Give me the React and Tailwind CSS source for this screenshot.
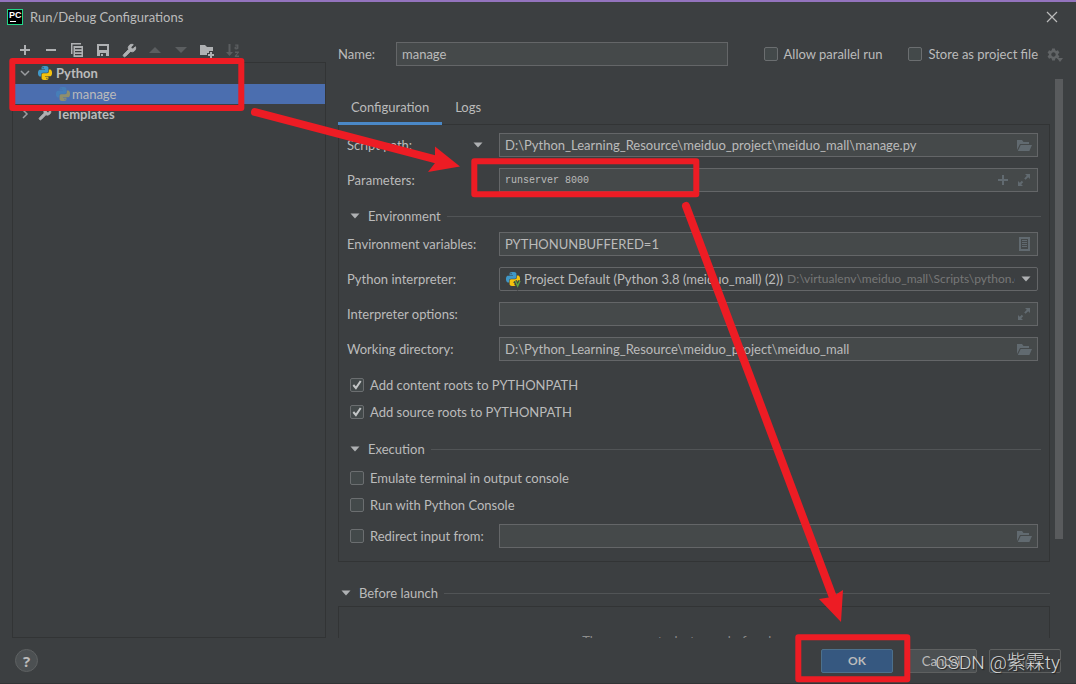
import { useId, useState } from "react";
import { Wrench } from "lucide-react";
import { MdSettings } from "react-icons/md";

const SNAKE =
  "M14.25.18l.9.2.73.26.59.3.45.32.34.34.25.34.16.33.1.3.04.26.02.2-.01.13V8.5l-.05.63-.13.55-.21.46-.26.38-.3.31-.33.25-.35.19-.35.14-.33.1-.3.07-.26.04-.21.02H8.77l-.69.05-.59.14-.5.22-.41.27-.33.32-.27.35-.2.36-.15.37-.1.35-.07.32-.04.27-.02.21v3.06H3.17l-.21-.03-.28-.07-.32-.12-.35-.18-.36-.26-.36-.36-.35-.46-.32-.59-.28-.73-.21-.88-.14-1.05-.05-1.23.06-1.22.16-1.04.24-.87.32-.71.36-.57.4-.44.42-.33.42-.24.4-.16.36-.1.32-.05.24-.01h.16l.06.01h8.16v-.83H6.18l-.01-2.75-.02-.37.05-.34.11-.31.17-.28.25-.26.31-.23.38-.2.44-.18.51-.15.58-.12.64-.1.71-.06.77-.04.84-.02 1.27.05zm-6.3 1.98l-.23.33-.08.41.08.41.23.34.33.22.41.09.41-.09.33-.22.23-.34.08-.41-.08-.41-.23-.33-.33-.22-.41-.09-.41.09z";

function PythonIcon({ className = "", venv = false }) {
  return (
    <svg viewBox="0 0 24 24" className={`size-[14px] shrink-0 overflow-visible ${className}`} aria-hidden="true">
      <path d={SNAKE} fill="#3f97c7" />
      <path d={SNAKE} fill="#f4c20d" transform="rotate(180 12 12)" />
      {venv && <path d="M16 15l4 10 4-10" fill="none" stroke="#3c3f41" strokeWidth="6" />}
      {venv && <path d="M16 15l4 9 4-9" fill="none" stroke="#5fa53f" strokeWidth="2.6" />}
    </svg>
  );
}

function Icon({ children, className = "size-4" }) {
  return (
    <svg viewBox="0 0 16 16" fill="currentColor" className={`shrink-0 ${className}`} aria-hidden="true">
      {children}
    </svg>
  );
}

const Down = ({ className }) => (
  <Icon className={className}>
    <path d="M3.5 5.5h9L8 10.5z" />
  </Icon>
);

const FolderIcon = () => (
  <Icon>
    <path d="M1 13V3h5l1.5 2H13v2H4z" />
    <path d="M4.7 8H16l-2.6 6H1.8z" />
  </Icon>
);

const ExpandIcon = () => (
  <Icon>
    <path d="M9 2h5v5l-1.8-1.8-2.6 2.6-1.4-1.4 2.6-2.6zM7 14H2V9l1.8 1.8 2-2 1.4 1.4-2 2z" />
  </Icon>
);

const ListIcon = () => (
  <Icon>
    <path fillRule="evenodd" d="M3 1h11v14H3zM5 3v10h7V3z" />
    <path d="M6 4h5v1H6zM6 6h5v1H6zM6 8h5v1H6zM6 10h5v1H6z" />
  </Icon>
);

const PlusIcon = () => (
  <Icon>
    <path d="M7 3h2v4h4v2H9v4H7V9H3V7h4z" />
  </Icon>
);

function ToolButton({ label, disabled, children }) {
  return (
    <button
      type="button"
      aria-label={label}
      disabled={disabled}
      className="flex h-6 w-[26px] items-center justify-center text-[#afb1b3] disabled:text-[#5b5e60]"
    >
      {children}
    </button>
  );
}

function Check({ label, initial = false }) {
  const [checked, setChecked] = useState(initial);
  return (
    <label className="flex h-5 items-center gap-[6px] whitespace-nowrap">
      <span className="grid size-[14px] shrink-0">
        <input
          type="checkbox"
          checked={checked}
          onChange={(e) => setChecked(e.target.checked)}
          className="col-start-1 row-start-1 size-[14px] appearance-none rounded-xs border border-[#6b6e70] bg-[#43494a]"
        />
        {checked && (
          <svg viewBox="0 0 14 14" className="pointer-events-none col-start-1 row-start-1 size-[14px]" aria-hidden="true">
            <path d="M3.300 7l2.600 3L10.700 3" fill="none" stroke="#c4c6c7" strokeWidth="2" />
          </svg>
        )}
      </span>
      {label}
    </label>
  );
}

function Field({ label, value = "", mono = false, arrow = false, actions }) {
  const id = useId();
  return (
    <div className="grid grid-cols-[152px_1fr] items-center">
      <div className="flex items-center justify-between pr-[13px]">
        <label htmlFor={id} className="whitespace-nowrap">{label}</label>
        {arrow && (
          <button type="button" aria-label="Choose target" className="text-[#afb1b3]">
            <Down className="size-4" />
          </button>
        )}
      </div>
      <InputBox id={id} value={value} mono={mono} actions={actions} />
    </div>
  );
}

function InputBox({ id, value = "", mono, actions, ariaLabel }) {
  return (
    <div className="flex h-6 min-w-0 items-center gap-[5px] border border-[#646668] bg-[#45494a] pr-[5px] text-[#616a70]">
      <input
        id={id}
        type="text"
        aria-label={ariaLabel}
        defaultValue={value}
        className={
          mono
            ? "h-full min-w-0 flex-1 bg-transparent px-[5px] font-['Liberation_Mono',monospace] text-[10px] text-[#bbbbbb] outline-none"
            : "h-full min-w-0 flex-1 bg-transparent px-[5px] text-[#bbbbbb] outline-none"
        }
      />
      {actions}
    </div>
  );
}

function Action({ label, children }) {
  return (
    <button type="button" aria-label={label} className="flex shrink-0">
      {children}
    </button>
  );
}

function SectionHeader({ title, className = "" }) {
  return (
    <div className={`flex h-6 items-center gap-[6px] ${className}`}>
      <button type="button" className="flex items-center gap-[5px]">
        <Down className="size-4 text-[#afb1b3]" />
        {title}
      </button>
      <div className="h-px flex-1 bg-[#515456]" />
    </div>
  );
}

function Toolbar() {
  return (
    <div className="flex h-6 shrink-0 overflow-hidden">
      <ToolButton label="Add"><PlusIcon /></ToolButton>
      <ToolButton label="Remove">
        <Icon><path d="M3 7h10v2H3z" /></Icon>
      </ToolButton>
      <ToolButton label="Copy">
        <Icon>
          <path d="M2 1h10v1.500H3.500V12H2z" />
          <path fillRule="evenodd" d="M4.500 4H14v11H4.500zM6 6v1.200h6.500V6zM6 9v1.200h6.500V9zM6 12v1.200h6.500V12z" />
        </Icon>
      </ToolButton>
      <ToolButton label="Save">
        <Icon>
          <path fillRule="evenodd" d="M2 2h12v12H2zM4 4v4h8V4zM5 11v3h6v-3z" />
          <path d="M6 12h2v2H6z" />
        </Icon>
      </ToolButton>
      <ToolButton label="Edit templates">
        <Wrench className="size-[15px]" fill="currentColor" strokeWidth={1.5} />
      </ToolButton>
      <ToolButton label="Move up" disabled>
        <Icon><path d="M2 11h12L8 5z" /></Icon>
      </ToolButton>
      <ToolButton label="Move down" disabled>
        <Icon><path d="M2 5h12l-6 6z" /></Icon>
      </ToolButton>
      <ToolButton label="Create folder">
        <Icon>
          <path d="M1 3h5l2 2h6v4h-4v2H8v2H1z" />
          <path d="M11 10h2v2h2v2h-2v2h-2v-2H9v-2h2z" />
        </Icon>
      </ToolButton>
      <ToolButton label="Sort" disabled>
        <Icon>
          <path d="M3.500 2h2v8H8l-3.500 4L1 10h2.500z" />
          <path d="M10 9.500h4v1l-2.500 3H14V15h-4.200v-1.200l2.500-2.800H10z" />
          <path
            d="M10.200 3.200h2.600v3.600M12.800 5h-1.800q-1 .1-1 .9t1 .9q1.300 0 1.800-.9"
            fill="none"
            stroke="currentColor"
            strokeWidth="1.200"
          />
        </Icon>
      </ToolButton>
    </div>
  );
}

function Tree() {
  return (
    <ul role="tree" aria-label="Configurations" className="min-h-0 flex-1 border border-[#323435]">
      <li role="treeitem" aria-expanded="true" aria-selected="false" className="flex h-[21px] items-center pb-px pl-1 font-bold">
        <svg viewBox="0 0 16 16" className="size-4" aria-hidden="true">
          <path d="M4 6l4 4 4-4" fill="none" stroke="#9b9da0" strokeWidth="1.500" />
        </svg>
        <PythonIcon className="mr-1 ml-[5px]" />
        Python
      </li>
      <li role="treeitem" aria-selected="true" className="flex h-5 items-center bg-[#4b6eaf] pl-[43px]">
        <PythonIcon className="mr-[2px] opacity-40" />
        manage
      </li>
      <li role="treeitem" aria-expanded="false" aria-selected="false" className="flex h-5 items-center pl-1 font-bold">
        <svg viewBox="0 0 16 16" className="size-4" aria-hidden="true">
          <path d="M6 4l4 4-4 4" fill="none" stroke="#9b9da0" strokeWidth="1.500" />
        </svg>
        <Wrench className="mr-1 ml-[5px] size-[14px] text-[#afb1b3]" fill="currentColor" strokeWidth={1.5} />
        Templates
      </li>
    </ul>
  );
}

function Interpreter() {
  const id = useId();
  return (
    <div className="grid grid-cols-[152px_1fr] items-center">
      <label htmlFor={id}>Python interpreter:</label>
      <div className="flex h-6 min-w-0 items-center rounded-xs border border-[#646668] pr-[3px] pl-[6px]">
        <PythonIcon venv className="mr-1" />
        <select id={id} className="shrink-0 appearance-none bg-transparent text-[#bbbbbb] outline-none">
          <option>Project Default (Python 3.8 (meiduo_mall) (2))</option>
        </select>
        <span className="ml-1 min-w-0 flex-1 overflow-hidden text-[12px] whitespace-nowrap text-[#777777]">
          D:\virtualenv\meiduo_mall\Scripts\python.exe
        </span>
        <Down className="ml-[3px] size-4 text-[#afb1b3]" />
      </div>
    </div>
  );
}

function ConfigurationPanel() {
  return (
    <div className="border border-[#323435] pt-2 pr-[11px] pb-[13px] pl-2">
      <div className="flex flex-col gap-[11px]">
        <Field
          label="Script path:"
          arrow
          value="D:\Python_Learning_Resource\meiduo_project\meiduo_mall\manage.py"
          actions={<Action label="Browse"><FolderIcon /></Action>}
        />
        <Field
          label="Parameters:"
          mono
          value="runserver 8000"
          actions={
            <>
              <Action label="Insert macro"><PlusIcon /></Action>
              <Action label="Expand"><ExpandIcon /></Action>
            </>
          }
        />
      </div>
      <SectionHeader title="Environment" className="mt-3 -mr-[3px] mb-1" />
      <div className="flex flex-col gap-[11px]">
        <Field
          label="Environment variables:"
          value="PYTHONUNBUFFERED=1"
          actions={<Action label="Edit variables"><ListIcon /></Action>}
        />
        <Interpreter />
        <Field label="Interpreter options:" actions={<Action label="Expand"><ExpandIcon /></Action>} />
        <Field
          label="Working directory:"
          value="D:\Python_Learning_Resource\meiduo_project\meiduo_mall"
          actions={<Action label="Browse"><FolderIcon /></Action>}
        />
      </div>
      <div className="mt-[14px] flex flex-col gap-[7px] pl-[3px]">
        <Check label="Add content roots to PYTHONPATH" initial />
        <Check label="Add source roots to PYTHONPATH" initial />
      </div>
      <SectionHeader title="Execution" className="mt-[15px] -mr-[3px] mb-[7px]" />
      <div className="flex flex-col gap-[7px] pl-[3px]">
        <Check label="Emulate terminal in output console" />
        <Check label="Run with Python Console" />
      </div>
      <div className="mt-[9px] grid grid-cols-[149px_1fr] items-center pl-[3px]">
        <Check label="Redirect input from:" />
        <InputBox ariaLabel="Redirect input file" actions={<Action label="Browse"><FolderIcon /></Action>} />
      </div>
    </div>
  );
}

function Annotations() {
  return (
    <svg className="pointer-events-none absolute top-0 left-0 h-[684px] w-[1076px]" viewBox="0 0 1076 684" aria-hidden="true">
      <g fill="none" stroke="#ed1c24" strokeWidth="6" strokeLinejoin="round">
        <rect x="12.300" y="61" width="229" height="47" />
        <rect x="474.300" y="161.300" width="222" height="33" />
        <rect x="798.300" y="637.300" width="109" height="42" />
      </g>
      <g stroke="#ed1c24" strokeWidth="8" strokeLinecap="round">
        <path d="M255 112L438 160" />
        <path d="M686 206L834 600" />
      </g>
      <g fill="#ed1c24">
        <path d="M435 146.500L460 166.500L428 172L435 163z" />
        <path d="M819 599L832 597L843 590L841 622z" />
      </g>
    </svg>
  );
}

export default function App() {
  const nameId = useId();
  return (
    <div className="relative flex h-screen flex-col overflow-hidden border-b border-b-[#323435] bg-[#3c3f41] font-[Lato,'Noto_Sans_CJK_SC',sans-serif] text-[13px] leading-5 text-[#bbbbbb]">
      <div className="h-[2px] shrink-0 bg-[#9373bd]" />
      <header className="flex h-[29px] shrink-0 items-center gap-[7px] pr-4 pl-[7px]">
        <div className="flex size-4 flex-col justify-between border border-[#21d789] bg-black px-px pt-px pb-[2px] font-['Liberation_Sans',sans-serif] text-[9px] leading-[8px] font-bold text-white">
          PC
          <span className="ml-px h-px w-[6px] bg-white" />
        </div>
        <h1 className="flex-1">Run/Debug Configurations</h1>
        <button type="button" aria-label="Close">
          <Icon>
            <path d="M3 3l10 10M13 3L3 13" stroke="#bbbbbb" strokeWidth="1.200" />
          </Icon>
        </button>
      </header>

      <main className="flex min-h-0 flex-1 gap-3 pr-[13px] pl-3">
        <aside className="flex w-[314px] shrink-0 flex-col pt-[7px]">
          <Toolbar />
          <Tree />
        </aside>

        <section className="flex min-w-0 flex-1 flex-col pt-[11px]">
          <div className="flex h-6 shrink-0 items-center">
            <label htmlFor={nameId} className="w-[58px] shrink-0">Name:</label>
            <input
              id={nameId}
              type="text"
              defaultValue="manage"
              className="h-6 min-w-0 flex-1 border border-[#646668] bg-[#45494a] px-[5px] outline-none"
            />
            <div className="ml-9 flex gap-[26px]">
              <Check label="Allow parallel run" />
              <Check label="Store as project file" />
            </div>
            <button type="button" aria-label="Storage settings" className="ml-2 flex items-end text-[#616466]">
              <MdSettings className="size-[15px]" aria-hidden="true" />
              <svg viewBox="0 0 6 4" className="-ml-1 h-1 w-[6px]" fill="currentColor" aria-hidden="true">
                <path d="M0 0h6L3 4z" />
              </svg>
            </button>
          </div>

          <div className="mt-[13px] flex min-h-0 flex-1 gap-[5px]">
            <div className="min-w-0 flex-1 overflow-hidden pt-3">
              <div role="tablist" className="relative -mb-px flex">
                <button type="button" role="tab" aria-selected="true" className="h-[34px] border-b-3 border-[#4a88c7] px-[13px]">
                  Configuration
                </button>
                <button type="button" role="tab" aria-selected="false" className="h-[34px] border-b-3 border-transparent px-[13px]">
                  Logs
                </button>
              </div>
              <ConfigurationPanel />
              <SectionHeader title="Before launch" className="mt-[19px] mb-px" />
              <div className="border border-[#323435] pt-6 pb-10 text-center text-[#8c8c8c]">
                There are no tasks to run before launch
              </div>
            </div>
            <div className="h-[460px] w-2 shrink-0 bg-[#595b5d]" />
          </div>
        </section>
      </main>

      <footer className="flex h-[45px] shrink-0 items-center gap-3 pr-[15px] pl-[15px]">
        <button
          type="button"
          aria-label="Help"
          className="flex size-[23px] items-center justify-center rounded-full border border-[#5e6162] bg-[#4c5052] font-['Noto_Sans',sans-serif] text-[15px] font-bold"
        >
          ?
        </button>
        <div className="flex-1" />
        <button type="button" className="h-6 w-[72px] rounded-xs border border-[#4c708c] bg-[#365880] text-[12px] font-bold">OK</button>
        <button type="button" className="h-6 w-[72px] rounded-xs border border-[#5e6060] bg-[#4c5052]">Cancel</button>
        <button type="button" disabled className="h-6 w-[72px] rounded-xs border border-[#5e6060] text-[#777777]">Apply</button>
      </footer>

      <Annotations />
      <div className="pointer-events-none absolute right-4 bottom-1 font-[Roboto,'Noto_Sans_CJK_SC',sans-serif] text-[19px] leading-8 font-light text-[#d4d5d5] [text-shadow:1px_1px_1px_#222]">
        CSDN @紫霖ty
      </div>
    </div>
  );
}
